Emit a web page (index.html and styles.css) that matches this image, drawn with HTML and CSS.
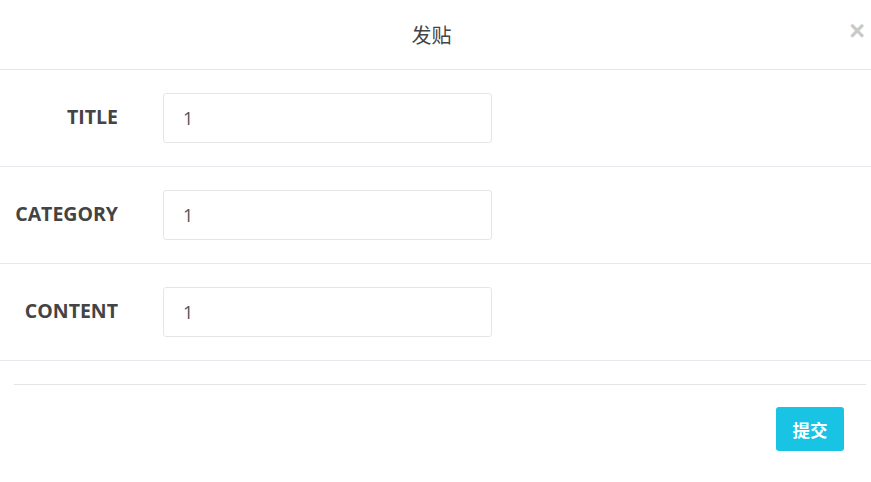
FILE: index.html
```html
<!DOCTYPE html>
<html lang="zh">

<head>
  <meta charset="UTF-8" />
  <meta name="viewport" content="width=device-width, initial-scale=1.0" />
  <title>发贴</title>
  <link rel="stylesheet" href="styles.css">
</head>

<body>
  <div class="modal">
    <div class="modal-header">
      <span></span>
      <h4>发贴</h4>
      <button class="close">×</button>
    </div>

    <div class="row">
      <label>TITLE</label>
      <input type="text" value="1" />
    </div>
    <div class="row">
      <label>CATEGORY</label>
      <input type="text" value="1" />
    </div>
    <div class="row">
      <label>CONTENT</label>
      <input type="text" value="1" />
    </div>

    <div class="modal-footer">
      <button class="submit">提交</button>
    </div>
  </div>
</body>

</html>
```

FILE: styles.css
```css
body {
  margin: 0;
  font-family: 'Open Sans', 'Noto Sans CJK SC', sans-serif;
  background: #fff;
  color: #676a6c;
}

.modal-header {
  display: grid;
  grid-template-columns: 1fr auto 1fr;
  align-items: center;
  height: 69px;
  border-bottom: 1px solid #e5e5e5;
}

.modal-header h4 {
  margin: 0;
  font-family: 'Noto Sans CJK SC', sans-serif;
  font-weight: 400;
  font-size: 20px;
  color: #444;
  transform: translateX(-4px);
}

.close {
  justify-self: end;
  margin-right: 6px;
  margin-top: -6px;
  padding: 0;
  border: none;
  background: none;
  font-family: 'Liberation Sans', sans-serif;
  font-size: 27px;
  font-weight: 700;
  color: #c9c9c9;
  line-height: 1;
  cursor: pointer;
}

.row {
  display: flex;
  align-items: center;
  gap: 45px;
  padding: 23px 0;
  border-bottom: 1px solid #e7e9ee;
}

.row label {
  width: 118px;
  text-align: right;
  font-size: 19.5px;
  font-weight: 700;
  color: #444;
  margin-top: -4px;
}

.row input {
  box-sizing: border-box;
  width: 329px;
  height: 50px;
  padding: 0 19px;
  border: 1px solid #e5e6e7;
  border-radius: 3px;
  font-family: 'Open Sans', sans-serif;
  font-size: 18px;
  color: #555;
  outline: none;
}

.modal-footer {
  margin: 23px 5px 0 14px;
  padding: 22px 22px 0 0;
  border-top: 1px solid #e5e5e5;
  display: flex;
  justify-content: flex-end;
}

.submit {
  width: 68px;
  height: 44px;
  border: none;
  border-radius: 3px;
  background: #19c3e3;
  color: #fff;
  font-family: 'Noto Sans CJK SC', sans-serif;
  font-size: 17.5px;
  font-weight: 700;
  cursor: pointer;
}
```
